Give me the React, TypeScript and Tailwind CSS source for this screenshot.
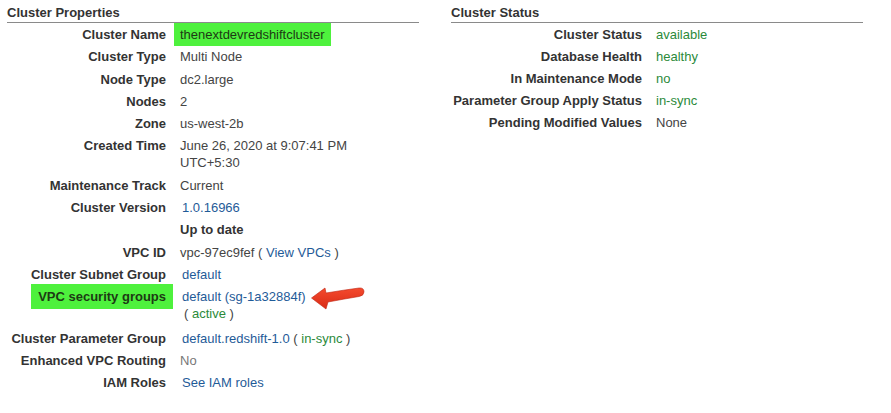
import React from "react";

const link = "text-[#1f5b98]";
const ok = "text-[#2b8a3a]";

type Row = { label: string; value: React.ReactNode; mark?: boolean; tall?: boolean };

const properties: Row[] = [
  {
    label: "Cluster Name",
    value: (
      <span className="bg-[#4ef13d] px-[6px] -ml-[6px] py-[4px] text-[#1d3a14]">
        thenextdevredshiftcluster
      </span>
    ),
  },
  { label: "Cluster Type", value: "Multi Node" },
  { label: "Node Type", value: "dc2.large" },
  { label: "Nodes", value: "2" },
  { label: "Zone", value: "us-west-2b" },
  {
    label: "Created Time",
    value: (
      <>
        June 26, 2020 at 9:07:41 PM
        <br />
        UTC+5:30
      </>
    ),
  },
  { label: "Maintenance Track", value: "Current" },
  { label: "Cluster Version", value: <span className={`${link} pl-[2px]`}>1.0.16966</span> },
  { label: "", value: <span className="font-bold text-[#333]">Up to date</span> },
  {
    label: "VPC ID",
    value: (
      <>
        vpc-97ec9fef ( <span className={link}>View VPCs</span> )
      </>
    ),
  },
  { label: "Cluster Subnet Group", value: <span className={`${link} pl-[2px]`}>default</span> },
  {
    label: "VPC security groups",
    mark: true,
    tall: true,
    value: (
      <span className="relative block pl-[2px]">
        <span className={link}>default (sg-1a32884f)</span>
        <br />
        <span className="pl-[2px]">
          ( <span className={ok}>active</span> )
        </span>
        {/* red annotation arrow */}
        <svg
          className="absolute left-[128px] top-[-3px]"
          width="58"
          height="26"
          viewBox="0 0 58 26"
        >
          <defs>
            <linearGradient id="arr" x1="0" y1="0" x2="0" y2="1">
              <stop offset="0" stopColor="#f44a2e" />
              <stop offset="1" stopColor="#d92b15" />
            </linearGradient>
          </defs>
          <path
            d="M3.5,13 L17,3 Q17.5,5.5 18,8 Q36,5 51,3 Q56,2.5 56,7 Q55.5,11 51,11.5 Q36,14 20,17 L18,24 Z"
            fill="url(#arr)"
            stroke="#bd2410"
            strokeWidth="0.6"
            strokeLinejoin="round"
          />
        </svg>
      </span>
    ),
  },
  {
    label: "Cluster Parameter Group",
    value: (
      <span className="pl-[2px]">
        <span className={link}>default.redshift-1.0</span> ( <span className={ok}>in-sync</span> )
      </span>
    ),
  },
  { label: "Enhanced VPC Routing", value: <span className="text-[#777]">No</span> },
  { label: "IAM Roles", value: <span className={`${link} pl-[2px]`}>See IAM roles</span> },
];

const status: Row[] = [
  { label: "Cluster Status", value: <span className={ok}>available</span> },
  { label: "Database Health", value: <span className={ok}>healthy</span> },
  { label: "In Maintenance Mode", value: <span className={ok}>no</span> },
  { label: "Parameter Group Apply Status", value: <span className={ok}>in-sync</span> },
  { label: "Pending Modified Values", value: "None" },
];

function Section({
  title,
  rows,
  labelWidth,
  rowPad,
}: {
  title: string;
  rows: Row[];
  labelWidth: string;
  rowPad: string;
}) {
  return (
    <section className="w-[412px]">
      <h2 className="pt-[4px] pb-[1px] text-[13px] leading-[17px] font-bold text-[#333] border-b border-[#8a8a8a]">
        {title}
      </h2>
      <div>
        {rows.map((r, i) => (
          <div
            key={i}
            className={`flex text-[13px] leading-[17px] pt-[3px] ${rowPad} ${r.tall ? "mb-[2px]" : ""}`}
          >
            <div className={`${labelWidth} shrink-0 text-right font-bold text-[#333]`}>
              {r.mark ? (
                <span className="bg-[#4ef13d] px-[7px] -mr-[7px] py-[5px] text-[#1d3a14]">
                  {r.label}
                </span>
              ) : (
                r.label
              )}
            </div>
            <div className="pl-[14px] text-[#444]">{r.value}</div>
          </div>
        ))}
      </div>
    </section>
  );
}

export default function App() {
  return (
    <div className="w-[891px] h-[413px] bg-white pl-[7px] font-['Liberation_Sans',Arial,sans-serif] flex gap-[32px]">
      <Section title="Cluster Properties" rows={properties} labelWidth="w-[159px]" rowPad="pb-[2.3px]" />
      <Section title="Cluster Status" rows={status} labelWidth="w-[191px]" rowPad="pb-[2px]" />
    </div>
  );
}
